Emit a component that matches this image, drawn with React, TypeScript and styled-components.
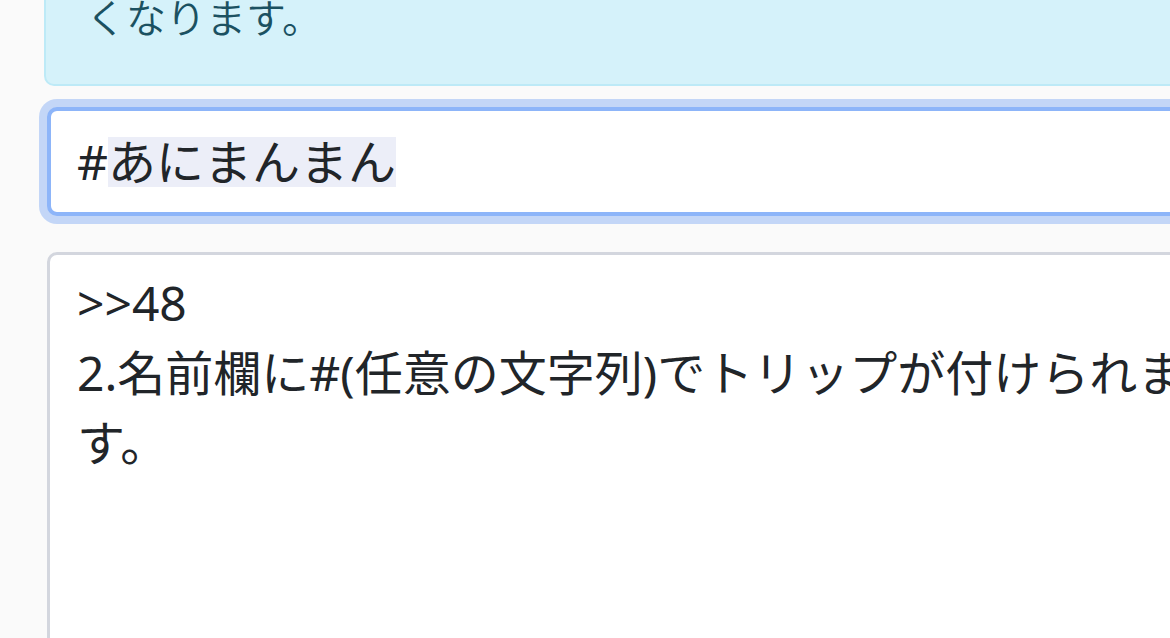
import React from "react";
import styled, { createGlobalStyle } from "styled-components";

const Global = createGlobalStyle`
  html, body {
    margin: 0;
    padding: 0;
    background: #fafafa;
  }
  body {
    font-family: "Noto Sans", "Noto Sans CJK JP", sans-serif;
    color: #212529;
  }
`;

const Page = styled.div`
  width: 1170px;
  height: 638px;
  overflow: hidden;
  padding-left: 44px;
  box-sizing: border-box;
  display: flex;
  flex-direction: column;
  align-items: flex-start;
`;

const Alert = styled.div`
  flex-shrink: 0;
  width: 1400px;
  margin-top: -40px;
  padding: 26px 40px 36px;
  background: #d5f2fa;
  border: 2px solid #bdeaf7;
  border-radius: 10px;
  color: #1b5161;
  font-size: 40px;
  font-weight: 350;
  line-height: 60px;
  box-sizing: border-box;
`;

const Input = styled.div`
  flex-shrink: 0;
  width: 1400px;
  margin: 21px 0 0 3px;
  height: 109px;
  box-sizing: border-box;
  border: 4px solid #8db5f9;
  border-radius: 10px;
  box-shadow: 0 0 0 8px #c3d6f7;
  background: #fff;
  padding: 0 26px;
  display: flex;
  align-items: center;
  font-size: 48px;
  font-weight: 400;
`;

const Plain = styled.span`
  display: inline-block;
  line-height: 50px;
`;

const Selected = styled.span`
  display: inline-block;
  line-height: 50px;
  height: 50px;
  background: #eceef8;
`;

const TextArea = styled.div`
  flex-shrink: 0;
  width: 1400px;
  height: 500px;
  margin: 36px 0 0 3px;
  box-sizing: border-box;
  border: 3px solid #d3d6de;
  border-radius: 10px;
  background: #fff;
  padding: 13px 27px 12px;
  font-size: 48px;
  font-weight: 400;
  line-height: 70px;
`;

const Line = styled.div`
  white-space: nowrap;
`;

export default function App() {
  return (
    <>
      <Global />
      <Page>
        <Alert>くなります。</Alert>
        <Input>
          <Plain>#</Plain>
          <Selected>あにまんまん</Selected>
        </Input>
        <TextArea>
          <Line>&gt;&gt;48</Line>
          <Line>2.名前欄に#(任意の文字列)でトリップが付けられま</Line>
          <Line>す。</Line>
        </TextArea>
      </Page>
    </>
  );
}
